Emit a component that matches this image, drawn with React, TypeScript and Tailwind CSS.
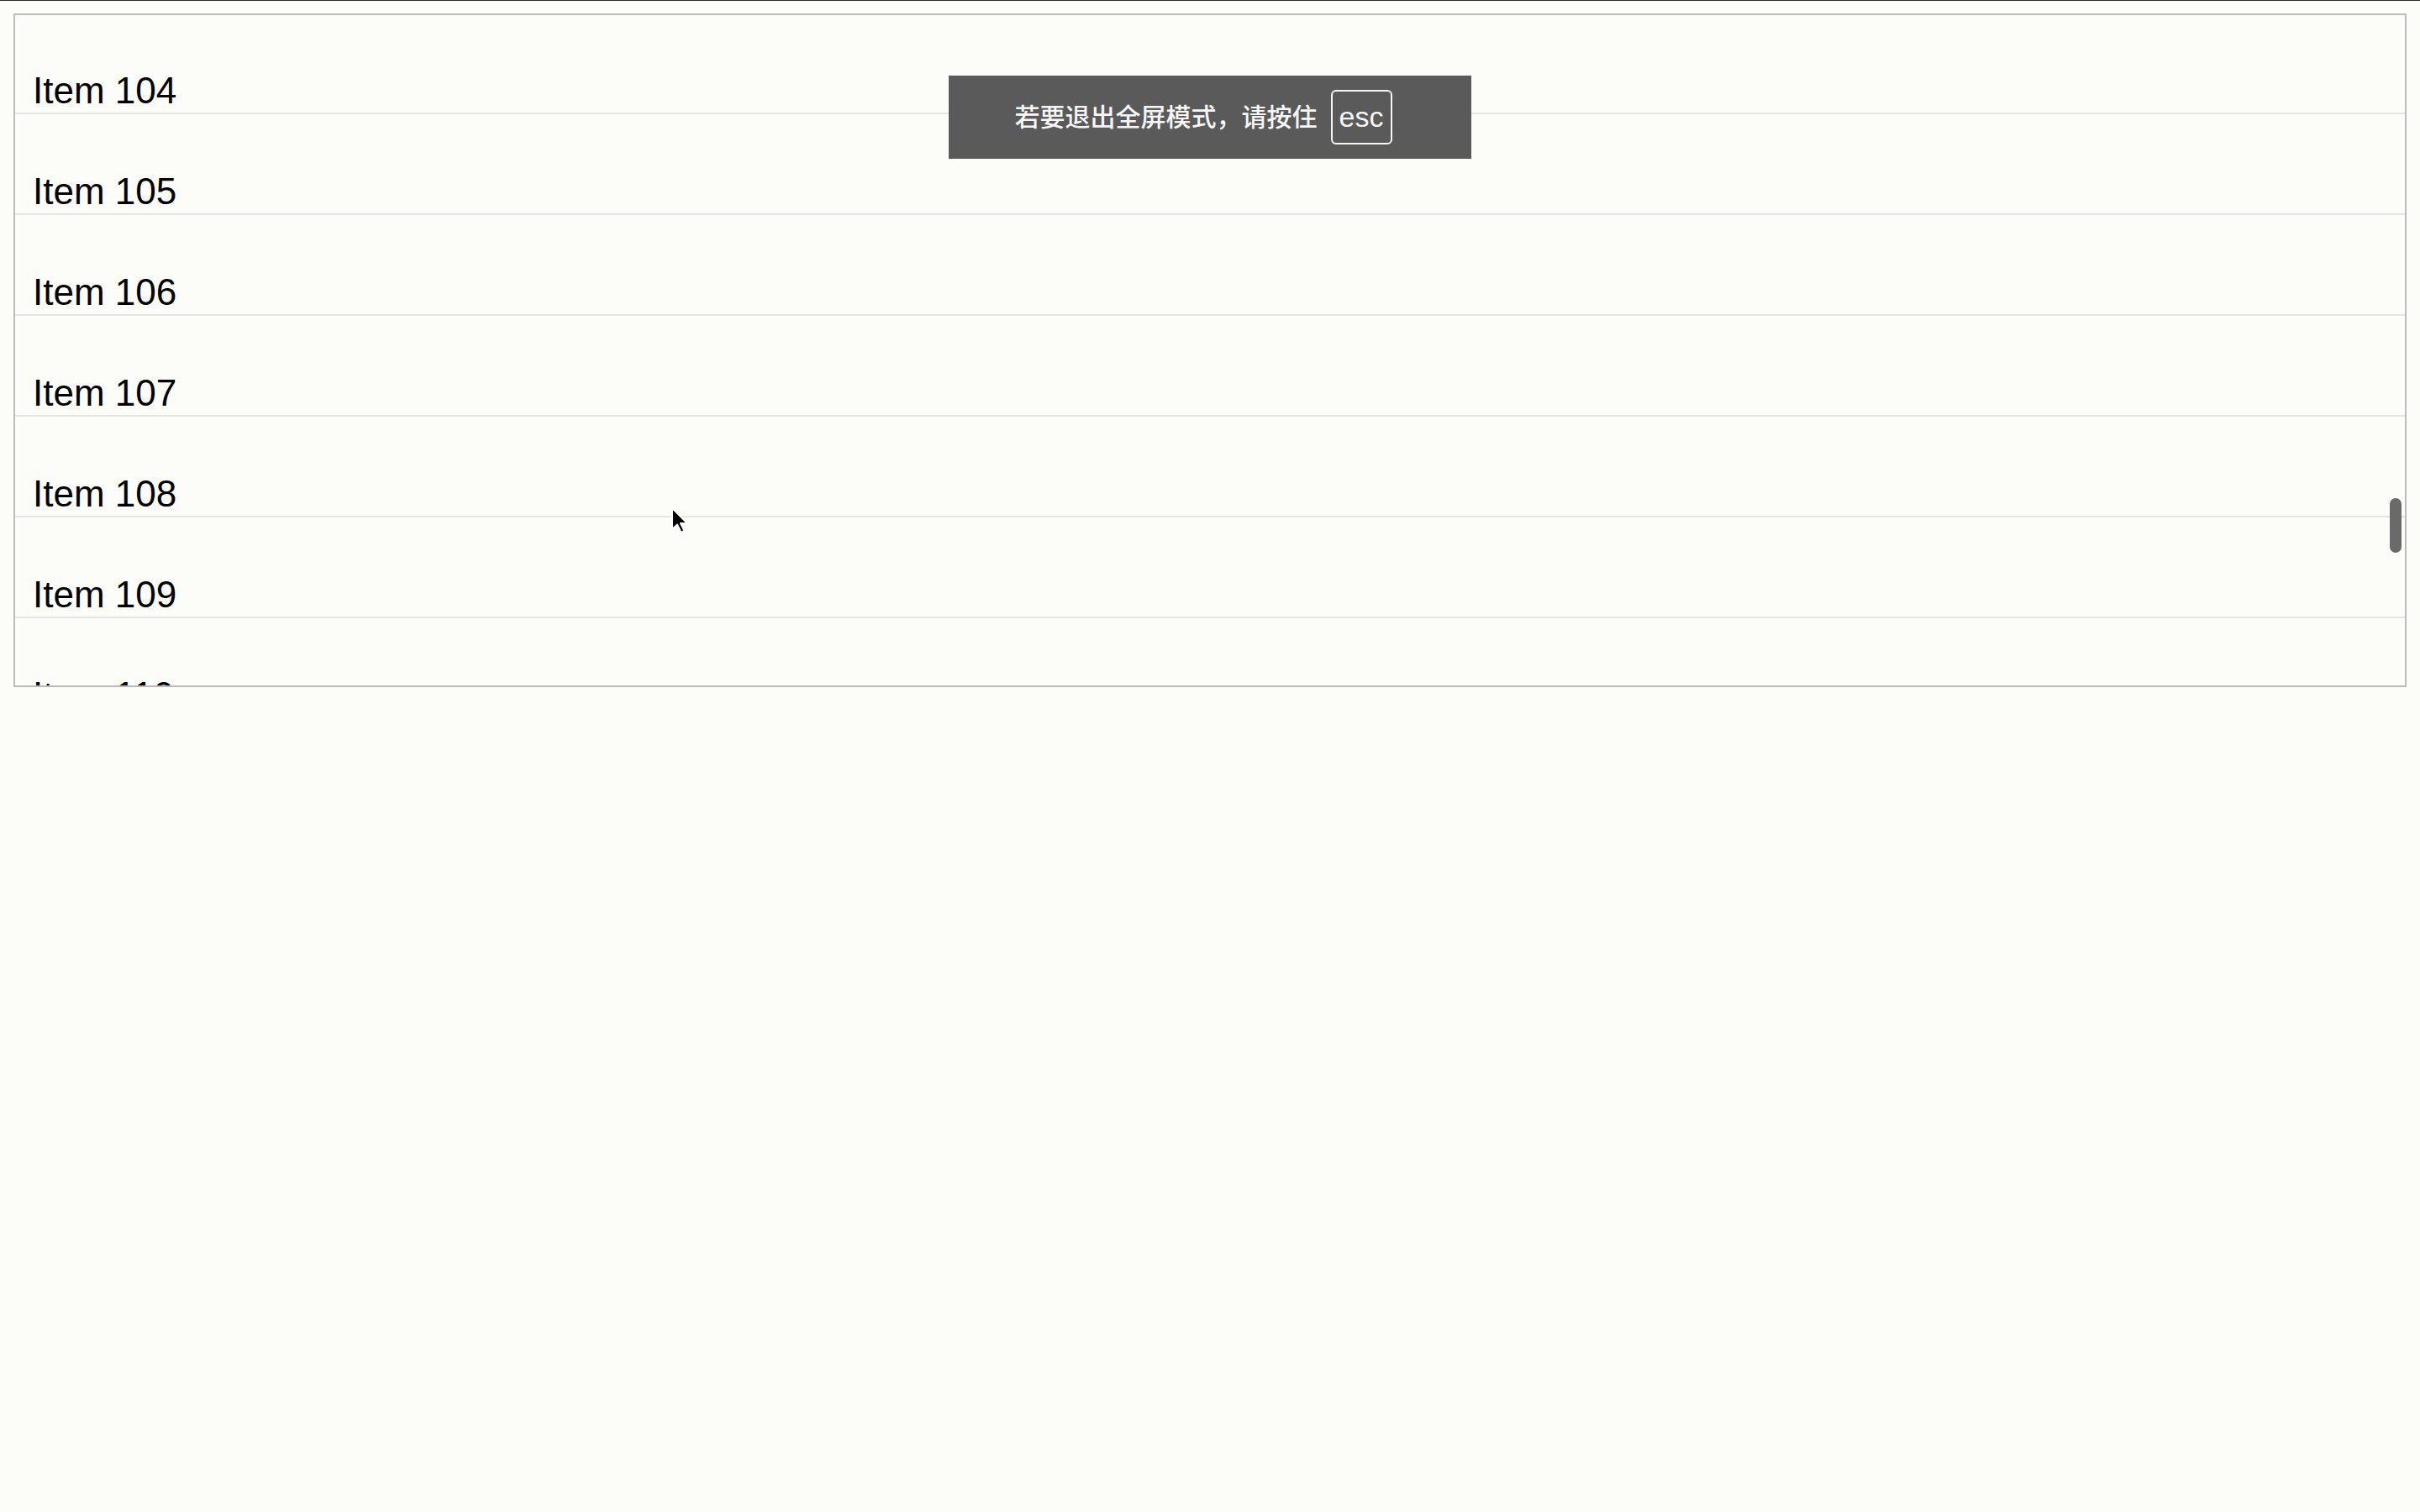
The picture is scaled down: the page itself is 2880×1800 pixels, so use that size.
const items = [104, 105, 106, 107, 108, 109, 110];

function Cursor() {
  return (
    <svg
      className="absolute left-[797px] top-[603px]"
      width="24"
      height="34"
      viewBox="0 0 24 34"
    >
      <path
        d="M3 2 L3 27 L9 21.5 L13.5 31 L17.5 29 L13 20 L21 20 Z"
        fill="#000"
        stroke="#fff"
        strokeWidth="2"
        strokeLinejoin="round"
      />
    </svg>
  );
}

export default function App() {
  return (
    <div className="relative min-h-screen bg-[#fcfcf8] font-['Liberation_Sans','Noto_Sans_CJK_SC',sans-serif]">
      <div className="h-px bg-[#2a2a2a]" />
      <div className="px-[16px] pt-[15px]">
        <div className="relative h-[802px] overflow-hidden border-2 border-[#bcbcbc]">
          <div className="-mt-[2px]">
            {items.map((n) => (
              <div
                key={n}
                className="flex h-[120px] items-end border-b-2 border-[#e4e4e4] pb-[4px] pl-[21px] text-[44px] leading-[44px] text-black"
              >
                Item {n}
              </div>
            ))}
          </div>
          <div className="absolute right-[4px] top-[575px] h-[65px] w-[14px] rounded-full bg-[#6a6a6a]" />
        </div>
      </div>

      <div className="absolute left-1/2 top-[90px] flex h-[99px] w-[622px] -translate-x-1/2 items-center justify-center gap-[16px] bg-[#5a5a5a] pr-[16px] text-[#f6f6f6]">
        <span className="pb-[6px] font-['Noto_Sans_CJK_SC',sans-serif] text-[30px] font-medium leading-none">
          若要退出全屏模式，请按住
        </span>
        <span className="flex h-[65px] w-[73px] items-center justify-center rounded-[6px] border-2 border-[#f6f6f6] pb-[2px] text-[34px] leading-none">
          esc
        </span>
      </div>

      <Cursor />
    </div>
  );
}
